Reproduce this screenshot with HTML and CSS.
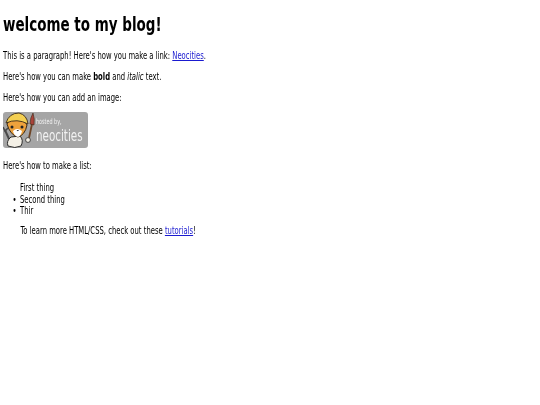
FILE: index.html
```html
<!DOCTYPE html>
<html lang="en">
<head>
<meta charset="utf-8">
<title>welcome to my blog!</title>
<link rel="stylesheet" href="styles.css">
</head>
<body>
<h1>welcome to my blog!</h1>
<p>This is a paragraph! Here's how you make a link: <a href="#">Neocities</a>.</p>
<p>Here's how you can make <strong>bold</strong> and <em>italic</em> text.</p>
<p>Here's how you can add an image:</p>
<div class="badge">
<svg class="cat" viewBox="0 0 36 36" width="36" height="36" aria-hidden="true">
<path d="M7 27 L3 18" stroke="#4a4a4a" stroke-width="2" fill="none"/>
<path d="M1 15 L3 19 L6 16" stroke="#4a4a4a" stroke-width="1.6" fill="none"/>
<path d="M9 25 Q4 29 6 34 Q13 37 19 34 Q22 28 18 24 Z" fill="#f4f0e6" stroke="#2c2c2c" stroke-width="1"/>
<path d="M5 12 Q8 23 16 25 Q23 23 25 13 L22 8 L8 7 Z" fill="#eda23c" stroke="#3a2a18" stroke-width="1"/>
<path d="M4 11 Q7 1 17 1 Q25 3 26 12 Q15 6 4 11 Z" fill="#f3cf52" stroke="#3a2a18" stroke-width=".9"/>
<path d="M11 19 Q15 15 20 19 Q19 24 16 25 Q12 24 11 19 Z" fill="#fff"/>
<circle cx="10" cy="15" r="1.5" fill="#222"/><circle cx="20" cy="15" r="1.5" fill="#222"/>
<path d="M14.5 18 h2.5 l-1.2 1.3 z" fill="#222"/>
<path d="M27 26 L30 12" stroke="#6d4527" stroke-width="1.8"/>
<path d="M28 12 Q28 6 31 1 Q33 7 32 13 Z" fill="#a9433a" stroke="#3a2a18" stroke-width=".6"/>
<circle cx="26" cy="28" r="2.4" fill="#f4f0e6" stroke="#2c2c2c" stroke-width=".8"/>
</svg>
<div class="badge-text"><span class="hosted">hosted by,</span><span class="brand">neocities</span></div>
</div>
<p class="after-badge">Here's how to make a list:</p>
<ul>
<li class="plain">First thing</li>
<li>Second thing</li>
<li>Thir</li>
</ul>
<p class="more">To learn more HTML/CSS, check out these <a href="#">tutorials</a>!</p>
</body>
</html>
```
FILE: styles.css
```css
html, body { background: #fff; }
body {
  margin: 0;
  padding: 0 3px;
  font-family: "DejaVu Sans Condensed", "DejaVu Sans", sans-serif;
  font-size: 10.2px;
  line-height: 11.3px;
  color: #000;
  filter: blur(.3px);
}
h1 {
  margin: 0;
  padding: 12px 0 3px;
  font-size: 20px;
  line-height: 25px;
  color: #000;
  transform: scaleX(.749);
  transform-origin: 0 0;
}
p, ul {
  transform: scaleX(.746);
  transform-origin: 0 0;
}
p { margin: 0; padding-top: 9.7px; }
a { color: #1a1ad0; }
.badge {
  display: flex;
  align-items: center;
  width: 85px;
  height: 36.5px;
  margin-top: 9px;
  background: #a5a5a5;
  border-radius: 3px;
  overflow: hidden;
}
.cat { flex: none; margin-left: -1px; }
.badge-text {
  display: flex;
  flex-direction: column;
  margin: 1px 0 0 -2px;
  color: #f2f2f2;
  transform: scaleX(.72);
  transform-origin: 0 50%;
}
.hosted { font-size: 7.5px; line-height: 9px; }
.brand { font-size: 16px; line-height: 19px; }
.after-badge { padding-top: 11.6px; }
ul { margin: 10.9px 0 0; padding-left: 22.8px; list-style: none; }
li::before {
  content: "•";
  display: inline-block;
  width: 10px;
  margin-left: -10px;
}
.plain::before { content: none; }
.more { padding: 9.1px 0 0 23.4px; }
```
